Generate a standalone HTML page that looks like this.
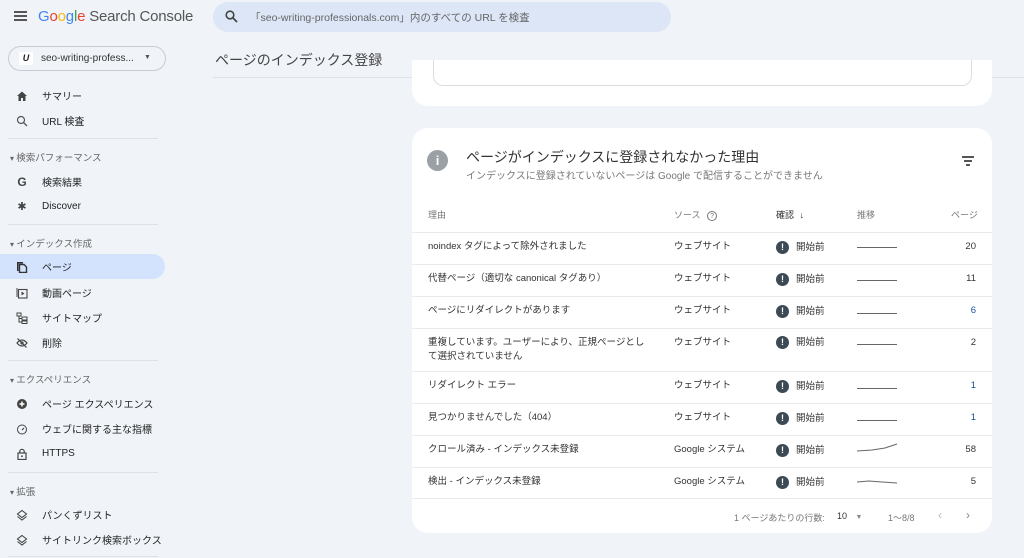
<!DOCTYPE html>
<html><head><meta charset="utf-8"><style>
*{margin:0;padding:0;box-sizing:border-box}
body{width:1024px;height:558px;overflow:hidden;background:#f0f4f9;font-family:"Liberation Sans","Noto Sans CJK JP",sans-serif;color:#1f1f1f;position:relative}
.abs{position:absolute}
.nav{position:absolute;left:0;width:165px;height:25px;display:flex;align-items:center;font-size:10px;color:#1f1f1f}
.nav .ic{width:12px;height:12px;margin-left:16px;margin-right:14px;display:flex;align-items:center;justify-content:center;font-size:11px;color:#444}
.nav svg{display:block}
.sec{position:absolute;left:10px;font-size:9.5px;color:#666}
.sec:before{content:"▾ ";font-size:8px}
.sep{position:absolute;left:8px;width:150px;height:1px;background:#dde1e6}
.row{position:absolute;left:412px;width:580px;border-top:1px solid #e8eaed;font-size:9.5px;color:#333;line-height:12px}
.row span{position:absolute}
.st{display:inline-block;width:13px;height:13px;border-radius:50%;background:#3c4a56;color:#fff;font-size:9px;font-weight:bold;font-style:normal;text-align:center;line-height:13px;margin-right:7px;vertical-align:middle}
</style></head><body>
<!-- header -->
<div class="abs" style="left:14px;top:11px;width:13px;height:10px;border-top:2px solid #555;border-bottom:2px solid #555"><div style="margin-top:2px;height:2px;background:#555"></div></div>
<div class="abs" style="left:38px;top:8px;font-size:15px;letter-spacing:-0.2px"><span style="color:#4285f4">G</span><span style="color:#ea4335">o</span><span style="color:#fbbc05">o</span><span style="color:#4285f4">g</span><span style="color:#34a853">l</span><span style="color:#ea4335">e</span> <span style="color:#555">Search Console</span></div>
<div class="abs" style="left:213px;top:2px;width:458px;height:30px;border-radius:15px;background:#dce6f6"></div>
<svg class="abs" style="left:225px;top:10px" width="13" height="13" viewBox="0 0 13 13"><circle cx="5" cy="5" r="3.8" fill="none" stroke="#444" stroke-width="1.6"/><line x1="8" y1="8" x2="12" y2="12" stroke="#444" stroke-width="1.8"/></svg>
<div class="abs" style="left:250px;top:10px;font-size:10.5px;color:#666">「seo-writing-professionals.com」内のすべての URL を検査</div>
<!-- property -->
<div class="abs" style="left:8px;top:46px;width:158px;height:25px;border:1px solid #c8ccd2;border-radius:13px"></div>
<div class="abs" style="left:19px;top:52px;width:14px;height:13px;background:#fff;font-size:9px;font-weight:bold;font-style:italic;text-align:center;line-height:13px">U</div>
<div class="abs" style="left:41px;top:53px;font-size:10px;color:#333">seo-writing-profess...</div>
<div class="abs" style="left:144px;top:54px;font-size:7px;color:#555">▼</div>
<!-- title -->
<div class="abs" style="left:215px;top:50px;font-size:14px;color:#444">ページのインデックス登録</div>
<div class="abs" style="left:213px;top:77px;width:811px;height:1px;background:#dde1e6"></div>
<!-- sidebar -->
<div class="nav" style="top:83px"><div class="ic"><svg width="12" height="12" viewBox="0 0 12 12"><path d="M1 6L6 1.5 11 6H9.5v5h-2.5V8h-2v3H2.5V6z" fill="#444"/></svg></div>サマリー</div>
<div class="nav" style="top:108px"><div class="ic"><svg width="12" height="12" viewBox="0 0 12 12"><circle cx="5" cy="5" r="3.5" fill="none" stroke="#555" stroke-width="1.2"/><line x1="7.5" y1="7.5" x2="11" y2="11" stroke="#555" stroke-width="1.3"/></svg></div>URL 検査</div>
<div class="sep" style="top:138px"></div>
<div class="sec" style="top:150px">検索パフォーマンス</div>
<div class="nav" style="top:169px"><div class="ic" style="font-weight:bold;font-size:12px">G</div>検索結果</div>
<div class="nav" style="top:194px"><div class="ic">✱</div>Discover</div>
<div class="sep" style="top:224px"></div>
<div class="sec" style="top:236px">インデックス作成</div>
<div class="nav" style="top:254px;background:#d3e3fd;border-radius:0 13px 13px 0"><div class="ic"><svg width="12" height="12" viewBox="0 0 12 12"><path d="M1 1h6v1.5H2.5V10H1z" fill="#333"/><path d="M3.5 3.5h4.5l2.5 2.5v5.5h-7z" fill="none" stroke="#333" stroke-width="1.4"/></svg></div>ページ</div>
<div class="nav" style="top:280px"><div class="ic"><svg width="12" height="12" viewBox="0 0 12 12"><rect x="2.5" y="2.5" width="8.5" height="8.5" fill="none" stroke="#444" stroke-width="1.1"/><path d="M1 1v9" stroke="#444"/><path d="M5.5 4.5l3 2-3 2z" fill="#444"/></svg></div>動画ページ</div>
<div class="nav" style="top:305px"><div class="ic"><svg width="12" height="12" viewBox="0 0 12 12"><rect x="1" y="1" width="4" height="3" fill="none" stroke="#444"/><rect x="6" y="5" width="5" height="3" fill="none" stroke="#444"/><rect x="6" y="9" width="5" height="2.5" fill="none" stroke="#444"/><path d="M3 4v6h3M3 6.5h3" fill="none" stroke="#444"/></svg></div>サイトマップ</div>
<div class="nav" style="top:330px"><div class="ic"><svg width="12" height="12" viewBox="0 0 12 12"><path d="M1 6q5-6 10 0q-5 6-10 0z" fill="none" stroke="#444" stroke-width="1.2"/><circle cx="6" cy="6" r="1.6" fill="#444"/><line x1="1.5" y1="1.5" x2="10.5" y2="10.5" stroke="#444" stroke-width="1.2"/></svg></div>削除</div>
<div class="sep" style="top:360px"></div>
<div class="sec" style="top:372px">エクスペリエンス</div>
<div class="nav" style="top:391px"><div class="ic"><svg width="12" height="12" viewBox="0 0 12 12"><circle cx="6" cy="6" r="5" fill="#444"/><path d="M6 3.5v5M3.5 6h5" stroke="#fff" stroke-width="1.5"/></svg></div>ページ エクスペリエンス</div>
<div class="nav" style="top:416px"><div class="ic"><svg width="12" height="12" viewBox="0 0 12 12"><circle cx="6" cy="6.5" r="4.5" fill="none" stroke="#444"/><line x1="6" y1="7" x2="8" y2="5" stroke="#444" stroke-width="1.2"/></svg></div>ウェブに関する主な指標</div>
<div class="nav" style="top:441px"><div class="ic"><svg width="12" height="12" viewBox="0 0 12 12"><rect x="2" y="5" width="8" height="6.5" fill="none" stroke="#444" stroke-width="1.2"/><path d="M3.8 5V3.5a2.2 2.2 0 0 1 4.4 0V5" fill="none" stroke="#444" stroke-width="1.2"/><circle cx="6" cy="8.2" r="0.9" fill="#444"/></svg></div>HTTPS</div>
<div class="sep" style="top:472px"></div>
<div class="sec" style="top:484px">拡張</div>
<div class="nav" style="top:502px"><div class="ic"><svg width="12" height="12" viewBox="0 0 12 12"><path d="M6 1.5L10.5 5 6 8.5 1.5 5z" fill="none" stroke="#444" stroke-width="1.1"/><path d="M1.5 7.5L6 11l4.5-3.5" fill="none" stroke="#444" stroke-width="1.1"/></svg></div>パンくずリスト</div>
<div class="nav" style="top:527px"><div class="ic"><svg width="12" height="12" viewBox="0 0 12 12"><path d="M6 1.5L10.5 5 6 8.5 1.5 5z" fill="none" stroke="#444" stroke-width="1.1"/><path d="M1.5 7.5L6 11l4.5-3.5" fill="none" stroke="#444" stroke-width="1.1"/></svg></div>サイトリンク検索ボックス</div>
<div class="sep" style="top:556px"></div>
<!-- top card -->
<div class="abs" style="left:412px;top:60px;width:580px;height:46px;background:#fff;border-radius:0 0 16px 16px"></div>
<div class="abs" style="left:433px;top:60px;width:539px;height:26px;border:1px solid #dadce0;border-top:none;border-radius:0 0 10px 10px"></div>
<!-- main card -->
<div class="abs" style="left:412px;top:128px;width:580px;height:405px;background:#fff;border-radius:16px"></div>
<div class="abs" style="left:427px;top:150px;width:21px;height:21px;border-radius:50%;background:#9aa0a6;color:#fff;font-weight:bold;font-size:13px;text-align:center;line-height:21px">i</div>
<div class="abs" style="left:466px;top:147px;font-size:14px;color:#333">ページがインデックスに登録されなかった理由</div>
<div class="abs" style="left:466px;top:167px;font-size:10px;color:#777">インデックスに登録されていないページは Google で配信することができません</div>
<div class="abs" style="left:962px;top:156px;width:12px;height:2px;background:#555"></div>
<div class="abs" style="left:964px;top:160px;width:8px;height:2px;background:#555"></div>
<div class="abs" style="left:966px;top:164px;width:4px;height:2px;background:#555"></div>
<div class="abs" style="left:428px;top:208px;font-size:9px;color:#777">理由</div>
<div class="abs" style="left:674px;top:208px;font-size:9px;color:#777">ソース <span style="display:inline-block;width:10px;height:10px;border:1px solid #777;border-radius:50%;font-size:7px;text-align:center;line-height:9px;margin-left:4px">?</span></div>
<div class="abs" style="left:776px;top:208px;font-size:9px;color:#333">確認 <span style="margin-left:3px">↓</span></div>
<div class="abs" style="left:857px;top:208px;font-size:9px;color:#777">推移</div>
<div class="abs" style="left:951px;top:208px;font-size:9px;color:#777">ページ</div>

<div class="row" style="top:232px;height:32px"><span style="left:16px;top:8px">noindex タグによって除外されました</span><span style="left:262px;top:8px">ウェブサイト</span><span style="left:364px;top:8px"><i class="st">!</i>開始前</span><span style="left:445px;top:14px;width:40px;height:1px;background:#666"></span><span style="right:16px;top:8px">20</span></div>
<div class="row" style="top:264px;height:32px"><span style="left:16px;top:8px">代替ページ（適切な canonical タグあり）</span><span style="left:262px;top:8px">ウェブサイト</span><span style="left:364px;top:8px"><i class="st">!</i>開始前</span><span style="left:445px;top:15px;width:40px;height:1px;background:#666"></span><span style="right:16px;top:8px">11</span></div>
<div class="row" style="top:296px;height:32px"><span style="left:16px;top:8px">ページにリダイレクトがあります</span><span style="left:262px;top:8px">ウェブサイト</span><span style="left:364px;top:8px"><i class="st">!</i>開始前</span><span style="left:445px;top:16px;width:40px;height:1px;background:#666"></span><span style="right:16px;top:8px;color:#1a4fa0">6</span></div>
<div class="row" style="top:328px;height:43px"><span style="left:16px;top:7px;line-height:14px">重複しています。ユーザーにより、正規ページとし<br>て選択されていません</span><span style="left:262px;top:8px">ウェブサイト</span><span style="left:364px;top:7px"><i class="st">!</i>開始前</span><span style="left:445px;top:15px;width:40px;height:1px;background:#666"></span><span style="right:16px;top:8px">2</span></div>
<div class="row" style="top:371px;height:32px"><span style="left:16px;top:8px">リダイレクト エラー</span><span style="left:262px;top:8px">ウェブサイト</span><span style="left:364px;top:8px"><i class="st">!</i>開始前</span><span style="left:445px;top:16px;width:40px;height:1px;background:#666"></span><span style="right:16px;top:8px;color:#1a4fa0">1</span></div>
<div class="row" style="top:403px;height:32px"><span style="left:16px;top:8px">見つかりませんでした（404）</span><span style="left:262px;top:8px">ウェブサイト</span><span style="left:364px;top:8px"><i class="st">!</i>開始前</span><span style="left:445px;top:16px;width:40px;height:1px;background:#666"></span><span style="right:16px;top:8px;color:#1a4fa0">1</span></div>
<div class="row" style="top:435px;height:32px"><span style="left:16px;top:8px">クロール済み - インデックス未登録</span><span style="left:262px;top:8px">Google システム</span><span style="left:364px;top:8px"><i class="st">!</i>開始前</span><svg style="position:absolute;left:445px;top:6px" width="42" height="12"><polyline points="0,9 15,8 28,6 40,2" fill="none" stroke="#666" stroke-width="1"/></svg><span style="right:16px;top:8px">58</span></div>
<div class="row" style="top:467px;height:32px;border-bottom:1px solid #e8eaed"><span style="left:16px;top:8px">検出 - インデックス未登録</span><span style="left:262px;top:8px">Google システム</span><span style="left:364px;top:8px"><i class="st">!</i>開始前</span><svg style="position:absolute;left:445px;top:10px" width="42" height="8"><polyline points="0,4 12,3 25,4 40,5" fill="none" stroke="#666" stroke-width="1"/></svg><span style="right:16px;top:8px">5</span></div>
<div class="abs" style="left:734px;top:511px;font-size:9px;color:#777">1 ページあたりの行数:</div>
<div class="abs" style="left:837px;top:511px;font-size:9px;color:#333">10 <span style="color:#888;font-size:7px;margin-left:6px">▼</span></div>
<div class="abs" style="left:888px;top:511px;font-size:9px;color:#777">1〜8/8</div>
<div class="abs" style="left:938px;top:508px;font-size:12px;color:#bbb">‹</div>
<div class="abs" style="left:966px;top:508px;font-size:12px;color:#888">›</div>
</body></html>
